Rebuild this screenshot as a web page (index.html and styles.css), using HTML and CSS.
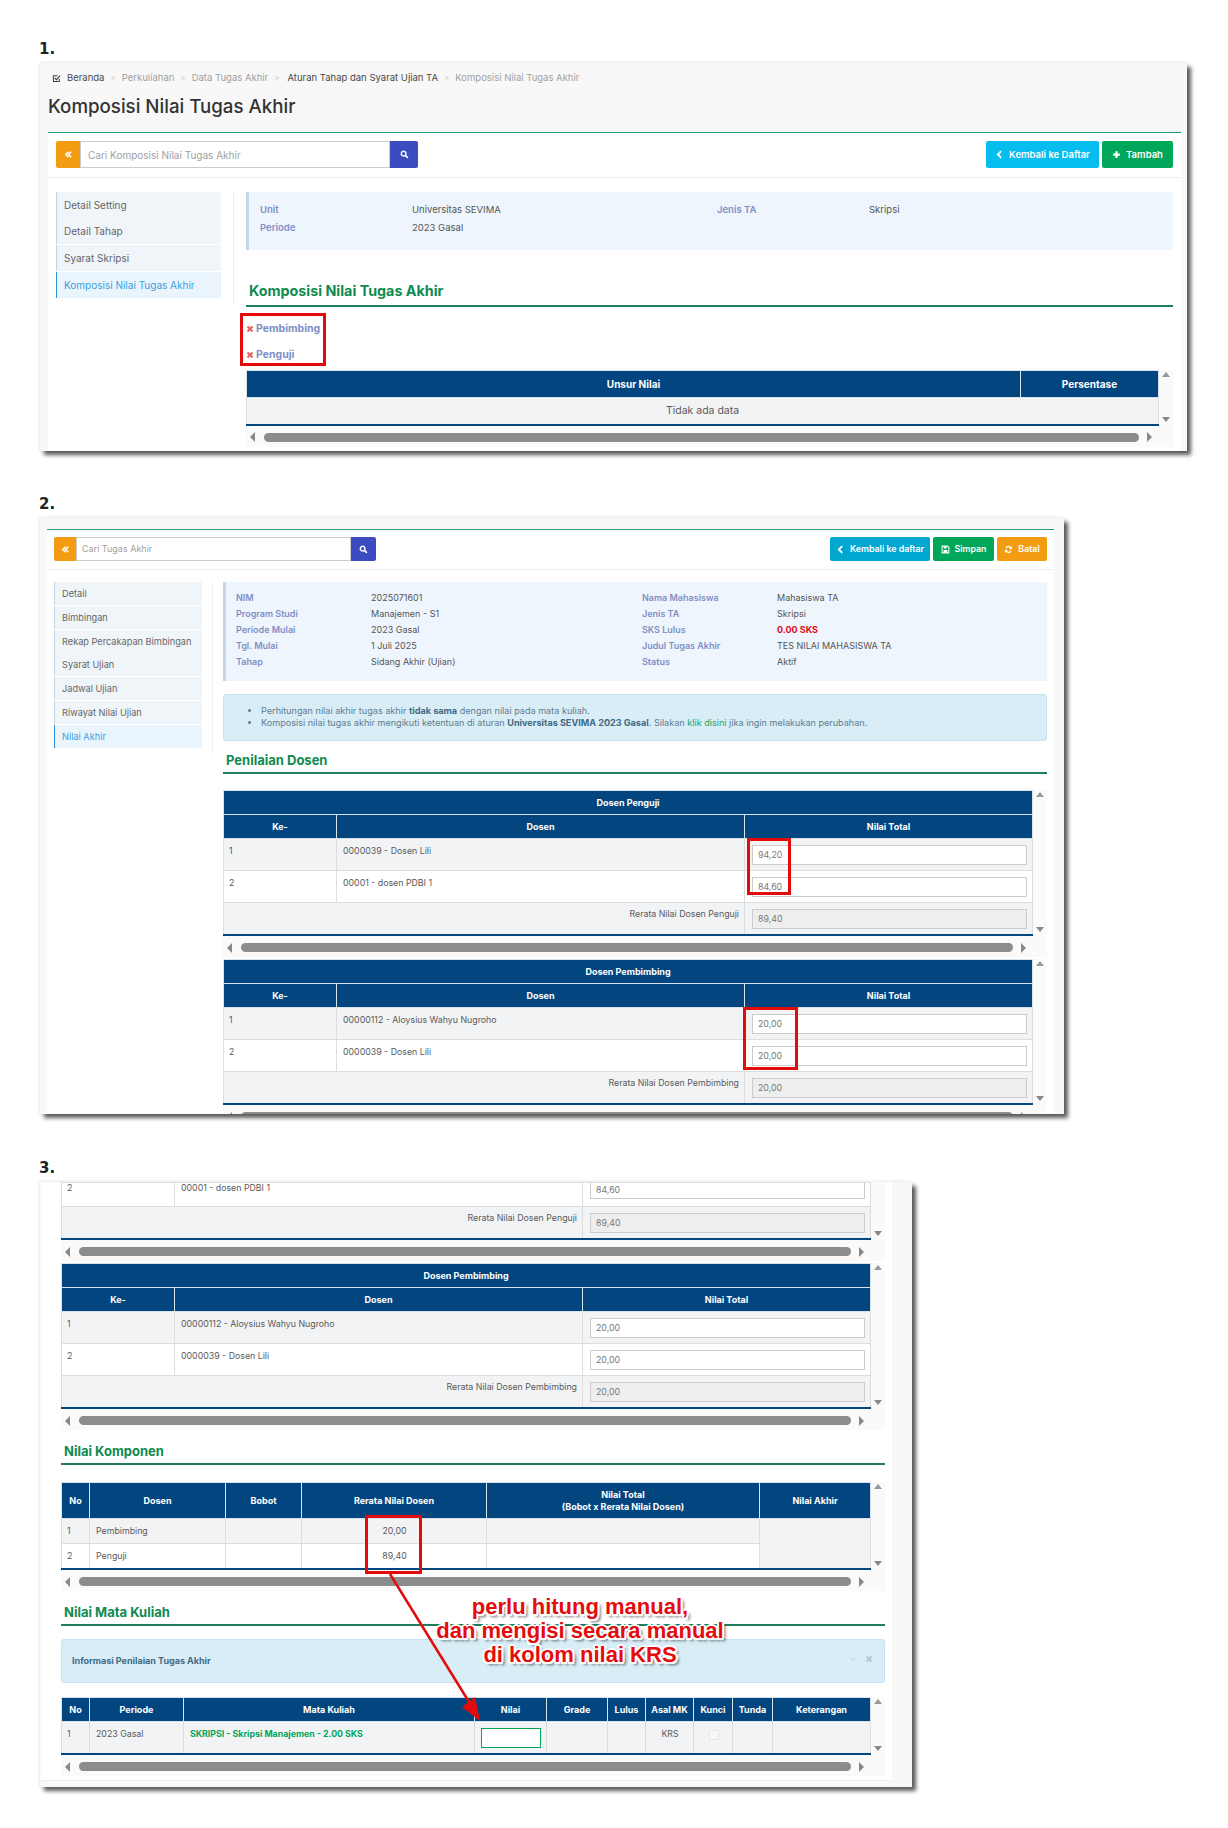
FILE: index.html
```html
<!DOCTYPE html>
<html lang="id">
<head>
<meta charset="utf-8">
<title>Komposisi Nilai Tugas Akhir</title>
<link rel="stylesheet" href="styles.css">
</head>
<body>
<svg class="sprite" aria-hidden="true">
  <symbol id="i-check" viewBox="0 0 16 16"><path d="M13 9v4.500H2.500V3H10" fill="none" stroke="currentColor" stroke-width="1.800"/><path d="M5 7l3 3 6.500-7" fill="none" stroke="currentColor" stroke-width="2.200"/></symbol>
  <symbol id="i-dbl" viewBox="0 0 16 16"><path d="M8 3L3 8l5 5M13 3L8 8l5 5" fill="none" stroke="currentColor" stroke-width="2.600"/></symbol>
  <symbol id="i-search" viewBox="0 0 16 16"><circle cx="6.500" cy="6.500" r="4.200" fill="none" stroke="currentColor" stroke-width="2.500"/><path d="M9.500 9.500l4.500 4.500" stroke="currentColor" stroke-width="3"/></symbol>
  <symbol id="i-left" viewBox="0 0 16 16"><path d="M11 2L5 8l6 6" fill="none" stroke="currentColor" stroke-width="3.200"/></symbol>
  <symbol id="i-plus" viewBox="0 0 16 16"><path d="M8 2v12M2 8h12" stroke="currentColor" stroke-width="4"/></symbol>
  <symbol id="i-save" viewBox="0 0 16 16"><path d="M2 2h9.500L14 4.500V14H2z" fill="none" stroke="currentColor" stroke-width="1.800"/><path d="M5 2.500h5v3.500H5zM4.500 9h7v4.500h-7z" fill="currentColor"/></symbol>
  <symbol id="i-refresh" viewBox="0 0 16 16"><path d="M13 6.500A5.300 5.300 0 0 0 3.600 5M3 9.500A5.300 5.300 0 0 0 12.400 11" fill="none" stroke="currentColor" stroke-width="2.400"/><path d="M14.500 2v5.500H9zM1.500 14V8.500H7z" fill="currentColor"/></symbol>
  <symbol id="i-times" viewBox="0 0 16 16"><path d="M3 3l10 10M13 3L3 13" stroke="currentColor" stroke-width="4"/></symbol>
  <symbol id="i-down" viewBox="0 0 16 16"><path d="M2 5l6 6 6-6" fill="none" stroke="currentColor" stroke-width="1.500"/></symbol>
</svg>

<h2 class="step step-one">1.</h2>
<section class="window win-one">
  <nav class="crumbs">
    <svg class="ic ic-crumb"><use href="#i-check"/></svg>
    <span class="crumb-dark">Beranda</span><span class="sep">&gt;</span>
    <span>Perkuliahan</span><span class="sep">&gt;</span>
    <span>Data Tugas Akhir</span><span class="sep">&gt;</span>
    <span class="crumb-dark crumb-wide">Aturan Tahap dan Syarat Ujian TA</span><span class="sep">&gt;</span>
    <span>Komposisi Nilai Tugas Akhir</span>
  </nav>
  <h1 class="page-title">Komposisi Nilai Tugas Akhir</h1>
  <div class="card">
    <div class="toolbar">
      <div class="search search-one">
        <span class="btn-addon orange"><svg class="ic"><use href="#i-dbl"/></svg></span>
        <span class="search-input">Cari Komposisi Nilai Tugas Akhir</span>
        <span class="btn-addon blue"><svg class="ic"><use href="#i-search"/></svg></span>
      </div>
      <div class="actions">
        <span class="btn cyan"><svg class="ic"><use href="#i-left"/></svg>Kembali ke Daftar</span>
        <span class="btn green"><svg class="ic"><use href="#i-plus"/></svg>Tambah</span>
      </div>
    </div>
    <div class="content">
      <ul class="side side-one">
        <li class="side-item joined">Detail Setting</li>
        <li class="side-item">Detail Tahap</li>
        <li class="side-item">Syarat Skripsi</li>
        <li class="side-item active">Komposisi Nilai Tugas Akhir</li>
      </ul>
      <div class="main">
        <dl class="info info-one">
          <dt>Unit</dt><dd>Universitas SEVIMA</dd><dt>Jenis TA</dt><dd>Skripsi</dd>
          <dt>Periode</dt><dd>2023 Gasal</dd>
        </dl>
        <h3 class="heading heading-tall first">Komposisi Nilai Tugas Akhir</h3>
        <ul class="tree">
          <li><svg class="ic ic-x"><use href="#i-times"/></svg>Pembimbing</li>
          <li><svg class="ic ic-x"><use href="#i-times"/></svg>Penguji</li>
        </ul>
        <div class="tbl-wrap">
          <table class="tbl">
            <colgroup><col class="c-unsur"><col class="c-persen"></colgroup>
            <thead><tr class="r-head-one"><th>Unsur Nilai</th><th>Persentase</th></tr></thead>
            <tbody><tr class="r-empty"><td colspan="2" class="t-center">Tidak ada data</td></tr></tbody>
          </table>
          <div class="vscroll"><i class="arr-up"></i><i class="arr-down"></i></div>
        </div>
        <div class="hscroll"><i class="arr-left"></i><b></b><i class="arr-right"></i></div>
      </div>
    </div>
  </div>
  <div class="mark mark-a"></div>
</section>

<h2 class="step step-two">2.</h2>
<section class="window win-two">
  <div class="card">
    <div class="toolbar">
      <div class="search search-two">
        <span class="btn-addon orange"><svg class="ic"><use href="#i-dbl"/></svg></span>
        <span class="search-input">Cari Tugas Akhir</span>
        <span class="btn-addon blue"><svg class="ic"><use href="#i-search"/></svg></span>
      </div>
      <div class="actions">
        <span class="btn teal"><svg class="ic"><use href="#i-left"/></svg>Kembali ke daftar</span>
        <span class="btn green"><svg class="ic"><use href="#i-save"/></svg>Simpan</span>
        <span class="btn amber"><svg class="ic"><use href="#i-refresh"/></svg>Batal</span>
      </div>
    </div>
    <div class="content">
      <ul class="side side-two">
        <li class="side-item">Detail</li>
        <li class="side-item">Bimbingan</li>
        <li class="side-item joined">Rekap Percakapan Bimbingan</li>
        <li class="side-item">Syarat Ujian</li>
        <li class="side-item">Jadwal Ujian</li>
        <li class="side-item">Riwayat Nilai Ujian</li>
        <li class="side-item active">Nilai Akhir</li>
      </ul>
      <div class="main">
        <dl class="info info-two">
          <dt>NIM</dt><dd>2025071601</dd><dt>Nama Mahasiswa</dt><dd>Mahasiswa TA</dd>
          <dt>Program Studi</dt><dd>Manajemen - S1</dd><dt>Jenis TA</dt><dd>Skripsi</dd>
          <dt>Periode Mulai</dt><dd>2023 Gasal</dd><dt>SKS Lulus</dt><dd class="danger">0.00 SKS</dd>
          <dt>Tgl. Mulai</dt><dd>1 Juli 2025</dd><dt>Judul Tugas Akhir</dt><dd>TES NILAI MAHASISWA TA</dd>
          <dt>Tahap</dt><dd>Sidang Akhir (Ujian)</dd><dt>Status</dt><dd>Aktif</dd>
        </dl>
        <div class="alert alert-list">
          <ul>
            <li>Perhitungan nilai akhir tugas akhir <strong>tidak sama</strong> dengan nilai pada mata kuliah.</li>
            <li>Komposisi nilai tugas akhir mengikuti ketentuan di aturan <strong>Universitas SEVIMA 2023 Gasal</strong>. Silakan <a class="link">klik disini</a> jika ingin melakukan perubahan.</li>
          </ul>
        </div>
        <h3 class="heading">Penilaian Dosen</h3>
        <div class="tbl-wrap tbl-gap">
          <table class="tbl">
            <colgroup><col class="c-ke"><col class="c-dosen"><col class="c-total"></colgroup>
            <thead>
              <tr class="r-head"><th colspan="3">Dosen Penguji</th></tr>
              <tr class="r-head"><th>Ke-</th><th>Dosen</th><th>Nilai Total</th></tr>
            </thead>
            <tbody>
              <tr class="r-odd"><td>1</td><td>0000039 - Dosen Lili</td><td><div class="field">94,20</div></td></tr>
              <tr class="r-even"><td>2</td><td>00001 - dosen PDBI 1</td><td><div class="field">84,60</div></td></tr>
              <tr class="r-odd"><td colspan="2" class="t-right">Rerata Nilai Dosen Penguji</td><td><div class="field off">89,40</div></td></tr>
            </tbody>
          </table>
          <div class="vscroll"><i class="arr-up"></i><i class="arr-down"></i></div>
        </div>
        <div class="hscroll"><i class="arr-left"></i><b></b><i class="arr-right"></i></div>
        <div class="tbl-wrap">
          <table class="tbl">
            <colgroup><col class="c-ke"><col class="c-dosen"><col class="c-total"></colgroup>
            <thead>
              <tr class="r-head"><th colspan="3">Dosen Pembimbing</th></tr>
              <tr class="r-head"><th>Ke-</th><th>Dosen</th><th>Nilai Total</th></tr>
            </thead>
            <tbody>
              <tr class="r-odd"><td>1</td><td>00000112 - Aloysius Wahyu Nugroho</td><td><div class="field">20,00</div></td></tr>
              <tr class="r-even"><td>2</td><td>0000039 - Dosen Lili</td><td><div class="field">20,00</div></td></tr>
              <tr class="r-odd"><td colspan="2" class="t-right">Rerata Nilai Dosen Pembimbing</td><td><div class="field off">20,00</div></td></tr>
            </tbody>
          </table>
          <div class="vscroll"><i class="arr-up"></i><i class="arr-down"></i></div>
        </div>
        <div class="hscroll"><i class="arr-left"></i><b></b><i class="arr-right"></i></div>
      </div>
    </div>
  </div>
  <div class="mark mark-b"></div>
  <div class="mark mark-c"></div>
</section>

<h2 class="step step-three">3.</h2>
<section class="window win-three">
  <div class="card card-plain">
    <div class="tbl-wrap">
      <table class="tbl">
        <colgroup><col class="c-ke"><col class="c-dosen"><col class="c-total"></colgroup>
        <tbody>
          <tr class="r-clip"><td>2</td><td>00001 - dosen PDBI 1</td><td><div class="field field-clip">84,60</div></td></tr>
          <tr class="r-odd"><td colspan="2" class="t-right">Rerata Nilai Dosen Penguji</td><td><div class="field off">89,40</div></td></tr>
        </tbody>
      </table>
      <div class="vscroll vscroll-end"><i class="arr-down"></i></div>
    </div>
    <div class="hscroll"><i class="arr-left"></i><b></b><i class="arr-right"></i></div>
    <div class="tbl-wrap">
      <table class="tbl">
        <colgroup><col class="c-ke"><col class="c-dosen"><col class="c-total"></colgroup>
        <thead>
          <tr class="r-head"><th colspan="3">Dosen Pembimbing</th></tr>
          <tr class="r-head"><th>Ke-</th><th>Dosen</th><th>Nilai Total</th></tr>
        </thead>
        <tbody>
          <tr class="r-odd"><td>1</td><td>00000112 - Aloysius Wahyu Nugroho</td><td><div class="field">20,00</div></td></tr>
          <tr class="r-even"><td>2</td><td>0000039 - Dosen Lili</td><td><div class="field">20,00</div></td></tr>
          <tr class="r-odd"><td colspan="2" class="t-right">Rerata Nilai Dosen Pembimbing</td><td><div class="field off">20,00</div></td></tr>
        </tbody>
      </table>
      <div class="vscroll"><i class="arr-up"></i><i class="arr-down"></i></div>
    </div>
    <div class="hscroll"><i class="arr-left"></i><b></b><i class="arr-right"></i></div>

    <h3 class="heading h-komponen">Nilai Komponen</h3>
    <div class="tbl-wrap tbl-gap-k">
      <table class="tbl">
        <colgroup><col class="k-no"><col class="k-dosen"><col class="k-bobot"><col class="k-rerata"><col class="k-total"><col class="k-akhir"></colgroup>
        <thead>
          <tr class="r-head-k"><th>No</th><th>Dosen</th><th>Bobot</th><th>Rerata Nilai Dosen</th><th>Nilai Total<br>(Bobot x Rerata Nilai Dosen)</th><th>Nilai Akhir</th></tr>
        </thead>
        <tbody>
          <tr class="r-slim r-tint"><td>1</td><td>Pembimbing</td><td></td><td class="t-center">20,00</td><td></td><td rowspan="2" class="tint"></td></tr>
          <tr class="r-slim r-white"><td>2</td><td>Penguji</td><td></td><td class="t-center">89,40</td><td></td></tr>
        </tbody>
      </table>
      <div class="vscroll"><i class="arr-up"></i><i class="arr-down"></i></div>
    </div>
    <div class="hscroll"><i class="arr-left"></i><b></b><i class="arr-right"></i></div>

    <h3 class="heading h-matkul">Nilai Mata Kuliah</h3>
    <div class="alert alert-info">
      <strong>Informasi Penilaian Tugas Akhir</strong>
      <span class="alert-tools"><svg class="ic"><use href="#i-down"/></svg><svg class="ic"><use href="#i-times"/></svg></span>
    </div>
    <div class="tbl-wrap tbl-gap-m">
      <table class="tbl">
        <colgroup><col class="m-no"><col class="m-per"><col class="m-mk"><col class="m-nilai"><col class="m-grade"><col class="m-lulus"><col class="m-asal"><col class="m-kunci"><col class="m-tunda"><col class="m-ket"></colgroup>
        <thead>
          <tr class="r-head"><th>No</th><th>Periode</th><th>Mata Kuliah</th><th>Nilai</th><th>Grade</th><th>Lulus</th><th>Asal MK</th><th>Kunci</th><th>Tunda</th><th>Keterangan</th></tr>
        </thead>
        <tbody>
          <tr class="r-odd"><td>1</td><td>2023 Gasal</td><td class="course">SKRIPSI - Skripsi Manajemen - 2.00 SKS</td><td><div class="field focus"></div></td><td></td><td></td><td class="t-center">KRS</td><td><div class="tick"></div></td><td></td><td></td></tr>
        </tbody>
      </table>
      <div class="vscroll"><i class="arr-up"></i><i class="arr-down"></i></div>
    </div>
    <div class="hscroll"><i class="arr-left"></i><b></b><i class="arr-right"></i></div>
  </div>
  <div class="mark mark-d"></div>
  <svg class="pointer" viewBox="0 0 460 560" aria-hidden="true">
    <line x1="350" y1="392" x2="434" y2="528"/>
    <polygon points="440,539 422,525 435,515"/>
  </svg>
  <p class="callout">perlu hitung manual,<br>dan mengisi secara manual<br>di kolom nilai KRS</p>
</section>
</body>
</html>
```
FILE: styles.css
```css
* { box-sizing: border-box; }
html, body { margin: 0; padding: 0; background: #fff; }
body {
  width: 1228px;
  height: 1828px;
  overflow: hidden;
  padding: 0 0 0 40px;
  font: 400 9.5px/14px Inter, "Open Sans", sans-serif;
  color: #555;
}
ul, dl, dd, h1, h2, h3, p { margin: 0; padding: 0; }
ul { list-style: none; }
.sprite { display: none; }
.ic { width: 11px; height: 11px; flex: none; display: block; }

.step { height: 25px; margin-left: -1px; font: 700 15px/22px "DejaVu Sans", sans-serif; color: #222; }
.step-one { margin-top: 38px; }
.step-two { margin-top: 42px; }
.step-three { margin-top: 43px; }

.window {
  position: relative;
  overflow: hidden;
  background: #f8f8f8;
  box-shadow: 4px 4px 4px rgba(40, 40, 40, .75), 0 0 3px rgba(0, 0, 0, .15);
}
.win-one { width: 1147px; height: 388px; padding: 8px 6px 0 8px; }
.win-two { width: 1024px; height: 596px; padding: 11px 10px 0 7px; }
.win-three { width: 872px; height: 605px; padding: 0 20px 6px 1px; }

.crumbs { display: flex; align-items: center; gap: 6px; height: 14px; padding-left: 4px; color: #a0a0a0; }
.crumb-dark { color: #484848; }
.crumb-wide { margin-left: 2px; }
.sep { color: #c4c4c4; font-size: 8px; }
.ic-crumb { width: 9px; height: 9px; color: #444; margin-right: 0; }
.page-title { margin: 10px 0 13px; font-size: 18.700px; line-height: 24px; font-weight: 500; color: #333; }

.card { height: 100%; background: #fff; border-top: 1px solid #2a9d6e; }
.win-one .card { height: 320px; overflow: hidden; }
.win-two .card { overflow: hidden; }
.card-plain { border-top: 0; padding: 0 7px 0 20px; border-bottom: 1px solid #eee; overflow: hidden; }

.toolbar { display: flex; justify-content: space-between; align-items: flex-start; border-bottom: 1px solid #eee; }
.win-one .toolbar { height: 45px; padding: 8px 8px 0; }
.win-two .toolbar { height: 40px; padding: 7px 7px 0; }
.search { display: flex; }
.search-one { width: 362px; height: 27px; }
.search-two { width: 322px; height: 24px; }
.btn-addon { display: flex; align-items: center; justify-content: center; color: #fff; flex: none; }
.btn-addon .ic { width: 9px; height: 9px; }
.orange { background: #f39c12; border-radius: 2px 0 0 2px; }
.blue { background: #3b4cc0; border-radius: 0 2px 2px 0; }
.search-one .orange { width: 24px; }
.search-one .blue { width: 28px; }
.search-two .orange { width: 22px; }
.search-two .blue { width: 25px; }
.search-input { flex: 1; display: flex; align-items: center; padding-left: 7px; border: 1px solid #ccc; color: #a0a0a0; }
.search-one .search-input { font-size: 10px; }
.search-two .search-input { font-size: 9px; padding-left: 5px; }
.actions { display: flex; gap: 3px; }
.btn { display: flex; align-items: center; justify-content: center; gap: 5px; color: #fff; font-weight: 600; border-radius: 2px; white-space: nowrap; }
.btn .ic { width: 9px; height: 9px; }
.win-one .btn { height: 27px; padding: 0 8px; }
.win-two .btn { height: 24px; padding: 0 8px; font-size: 8.800px; }
.cyan { background: #05bdee; width: 113px; }
.teal { background: #00a7d0; width: 100px; }
.green { background: #00a65a; }
.win-one .green { width: 71px; }
.win-two .green { width: 61px; }
.amber { background: #f39c12; width: 50px; }

.content { display: flex; align-items: flex-start; }
.win-one .content { padding: 14px 8px 0; gap: 12px; }
.win-two .content { padding: 12px 7px 0; gap: 10px; }
.side { flex: none; border-right: 1px solid #eee; }
.side-one { width: 178px; height: 113px; padding-right: 12px; }
.side-two { width: 159px; height: 172px; padding-right: 10px; }
.side-item { display: flex; align-items: center; padding-left: 7px; background: #f0f5f9; border-left: 1px solid #c5d3df; color: #666; margin-bottom: 1px; }
.side-one .side-item { height: 26px; font-size: 10px; }
.side-two .side-item { height: 23px; padding-left: 7px; font-size: 9.200px; }
.side-item.joined { margin-bottom: 0; }
.side-item.active { background: #eaf4fd; border-left-color: #2a8fd6; color: #3aa0e0; }
.main { flex: 1; min-width: 0; }

.info { display: grid; background: #eef5fc; border-left: 3px solid #c5d5e5; color: #555; }
.info dt { font-weight: 600; color: #7e8fc6; }
.info-one { height: 58px; padding: 9px 0 0 11px; grid-template-columns: 152px 305px 152px 1fr; grid-auto-rows: 18px; line-height: 18px; }
.info-two { height: 99px; padding: 8px 0 0 10px; grid-template-columns: 135px 271px 135px 1fr; grid-auto-rows: 16px; line-height: 16px; font-size: 9px; }
.danger { color: #e30b1a; font-weight: 700; }

.heading { height: 26px; padding-left: 3px; font-size: 13px; line-height: 24px; font-weight: 700; color: #0f8a50; border-bottom: 2px solid #1e7e5a; }
.heading-tall { height: 28px; font-size: 14.300px; }
.heading.first { margin-top: 29px; }
.tree { margin: 9px 0 2px; }
.tree li { display: flex; align-items: center; gap: 2px; height: 26px; font-size: 10.500px; font-weight: 700; color: #7e8fc6; }
.ic-x { width: 8px; height: 8px; color: #e8605a; }

.alert { background: #d9edf7; border: 1px solid #c6e2ef; border-radius: 3px; color: #5f7d8f; }
.alert-list { height: 47px; margin: 13px 0 7px; padding: 10px 0 0 22px; font-size: 9.100px; line-height: 12px; }
.alert-list ul { list-style: disc; padding-left: 15px; }
.alert strong { color: #3f6a86; }
.link { color: #1ea36a; }
.alert-info { position: relative; display: flex; align-items: center; height: 44px; margin: 13px 0 0; padding-left: 10px; font-size: 9px; }
.alert-tools { position: absolute; top: 15px; right: 11px; display: flex; gap: 8px; color: #b4c8d2; }
.alert-tools .ic { width: 8px; height: 8px; }

.tbl-wrap { display: flex; align-items: stretch; }
.tbl-gap { margin-top: 16px; }
.tbl-gap-k { margin-top: 17px; }
.tbl-gap-m { margin-top: 14px; }
.tbl { flex: none; table-layout: fixed; border-collapse: collapse; border-bottom: 2px solid #03467f; font-size: 8.800px; }
.win-one .tbl { width: 912px; }
.win-two .tbl, .win-three .tbl { width: 809px; }
.tbl th { background: #03467f; color: #fff; font-weight: 700; text-align: center; padding: 0 2px; border: 1px solid #d6e2ec; font-size: 9px; line-height: 12px; }
.win-one .tbl th { font-size: 10px; }
.win-one .tbl td { font-size: 10.500px; }
.tbl td { padding: 5px 5px; vertical-align: top; border: 1px solid #ddd; color: #5a5a5a; }
.tbl td + td { padding-left: 6px; }
.tbl td.t-right { padding-top: 4px; }
.r-head { height: 24px; }
.r-head-one { height: 27px; }
.r-head-k { height: 36px; }
.r-empty { height: 27px; background: #f2f3f5; }
.r-odd { height: 31.500px; background: #f2f3f5; }
.r-even { height: 31.500px; background: #fff; }
.r-clip { height: 24px; background: #fff; }
.tbl .r-clip td { padding-top: 0; line-height: 10px; }
.r-slim { height: 24px; }
.r-tint, .tint { background: #f2f3f5; }
.r-white { background: #fff; }
.t-center { text-align: center; }
.t-right { text-align: right; }
.r-empty td { vertical-align: middle; }
.tbl td.course { color: #00a65a; font-weight: 700; white-space: nowrap; }

.field { height: 20px; margin: 1px 0 0 1px; padding-left: 5px; background: #fff; border: 1px solid #ccc; color: #777; line-height: 18px; }
.field.off { background: #eee; }
.field-clip { margin-top: -3px; height: 19px; }
.field.focus { margin: 1px 0 0; border-color: #00a65a; }
.tick { width: 10px; height: 10px; margin: 3px auto 0; background: #f8f8f8; border: 1px solid #e6e6e6; }

.c-unsur { width: 774px; }
.c-persen { width: 138px; }
.c-ke { width: 113px; }
.c-dosen { width: 408px; }
.c-total { width: 288px; }
.k-no { width: 28px; }
.k-dosen { width: 136px; }
.k-bobot { width: 76px; }
.k-rerata { width: 185px; }
.k-total { width: 273px; }
.k-akhir { width: 111px; }
.m-no { width: 28px; }
.m-per { width: 94px; }
.m-mk { width: 291px; }
.m-nilai { width: 72px; }
.m-grade { width: 61px; }
.m-lulus { width: 38px; }
.m-asal { width: 48px; }
.m-kunci { width: 39px; }
.m-tunda { width: 40px; }
.m-ket { width: 98px; }

.vscroll { flex: 1; display: flex; flex-direction: column; justify-content: space-between; align-items: center; padding: 2px 0 4px; background: #fafafa; }
.vscroll-end { justify-content: flex-end; }
.arr-up, .arr-down, .arr-left, .arr-right { display: block; width: 0; height: 0; border-style: solid; border-color: transparent; }
.arr-up { border-width: 0 4.500px 5px; border-bottom-color: #999; }
.arr-down { border-width: 5px 4.500px 0; border-top-color: #888; }
.arr-left { border-width: 5px 5px 5px 0; border-right-color: #888; }
.arr-right { border-width: 5px 0 5px 5px; border-left-color: #888; }
.hscroll { display: flex; align-items: center; height: 23px; padding: 0 21px 0 4px; gap: 7px; background: linear-gradient(#fafafa 21px, transparent 21px); }
.hscroll b { flex: 1; height: 9px; margin: 0 1px 0 2px; border-radius: 5px; background: #8c8c8c; }

.h-komponen { margin-top: 7px; }
.h-matkul { margin-top: 7px; }

.mark { position: absolute; border: 3px solid #e30b0b; }
.mark-a { left: 200px; top: 250px; width: 86px; height: 53px; }
.mark-b { left: 707px; top: 320px; width: 44px; height: 57px; }
.mark-c { left: 703px; top: 489px; width: 55px; height: 63px; }
.mark-d { left: 325px; top: 333px; width: 57px; height: 59px; }

.pointer { position: absolute; left: 0; top: 0; width: 460px; height: 560px; }
.pointer line { stroke: #e30b0b; stroke-width: 2.500; }
.pointer polygon { fill: #e30b0b; }
.callout {
  position: absolute;
  left: 340px;
  top: 413px;
  width: 400px;
  text-align: center;
  font: 700 22px/24px "Liberation Sans", Arial, sans-serif;
  color: #e30d0d;
  text-shadow: 2px 0 0 #fff, -2px 0 0 #fff, 0 2px 0 #fff, 0 -2px 0 #fff, 1.500px 1.500px 0 #fff, -1.500px -1.500px 0 #fff, 1.500px -1.500px 0 #fff, -1.500px 1.500px 0 #fff, 3px 3px 3px rgba(0, 0, 0, .6);
}
```
